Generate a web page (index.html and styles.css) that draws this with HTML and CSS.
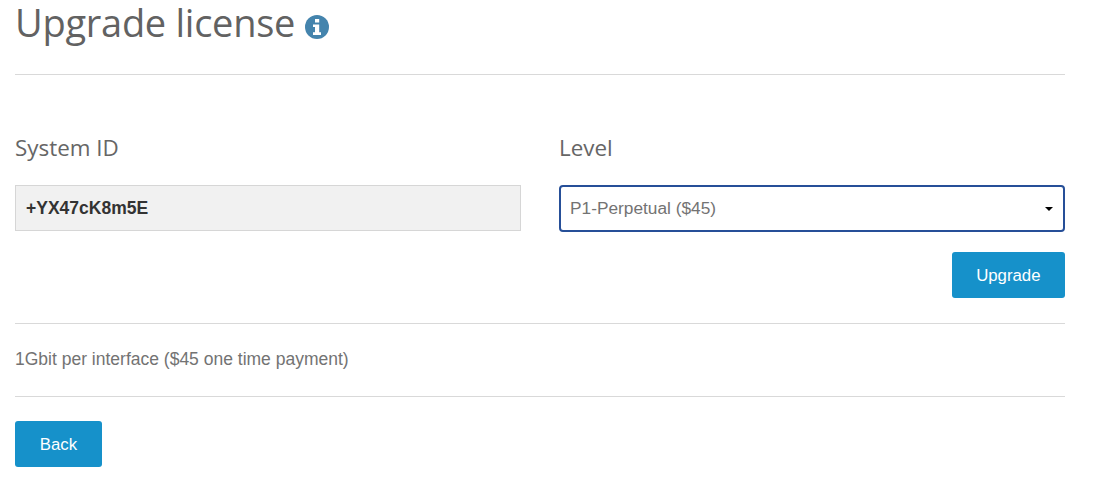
FILE: index.html
```html
<!DOCTYPE html>
<html lang="en">
<head>
  <meta charset="UTF-8">
  <meta name="viewport" content="width=device-width, initial-scale=1.0">
  <title>Upgrade license</title>
  <link rel="stylesheet" href="styles.css">
</head>
<body>
  <div class="container">
    <h1>
      Upgrade license
      <svg class="info" viewBox="0 0 24 24" aria-label="Info">
        <circle cx="12" cy="12" r="12"/>
        <path d="M8 9.5h6.2v7.8H16V20H8v-2.7h2V12H8zM10 4h4.2v3.4H10z"/>
      </svg>
    </h1>

    <form class="upgrade-form">
      <div class="row">
        <div class="field">
          <label for="systemId">System ID</label>
          <div class="system-id" id="systemId">+YX47cK8m5E</div>
        </div>
        <div class="field">
          <label for="level">Level</label>
          <div class="select" id="level" tabindex="0">
            <span>P1-Perpetual ($45)</span>
            <span class="caret"></span>
          </div>
        </div>
      </div>
      <div class="actions">
        <button type="button" class="button">Upgrade</button>
      </div>
    </form>

    <p class="description">1Gbit per interface ($45 one time payment)</p>

    <button type="button" class="button back">Back</button>
  </div>
</body>
</html>
```

FILE: styles.css
```css
* {
  box-sizing: border-box;
}

body {
  margin: 0;
  background: #fff;
  color: #737373;
  font-family: "Liberation Sans", Arial, sans-serif;
  font-size: 17.5px;
}

.container {
  width: 1050px;
  margin-left: 15px;
}

h1 {
  display: flex;
  align-items: center;
  gap: 10px;
  height: 75px;
  margin: 0;
  padding-bottom: 29px;
  border-bottom: 1px solid #d9d9d9;
  color: #626262;
  font-family: "Open Sans", sans-serif;
  font-size: 38px;
  font-weight: 400;
  letter-spacing: -0.27px;
  line-height: 45px;
}

.info {
  width: 24px;
  height: 24px;
  margin-top: 9px;
  fill: #4484ad;
}

.info path {
  fill: #fff;
}

.upgrade-form {
  height: 249px;
  padding-top: 56px;
  border-bottom: 1px solid #d9d9d9;
}

.row {
  display: grid;
  grid-template-columns: 1fr 1fr;
  gap: 38px;
}

label {
  display: block;
  height: 54px;
  color: #666;
  font-family: "Open Sans", sans-serif;
  font-size: 22.4px;
  line-height: 34px;
}

.system-id {
  height: 46px;
  padding: 0 10px;
  border: 1px solid #d6d6d6;
  background: #f1f1f1;
  color: #333;
  font-weight: bold;
  line-height: 44px;
}

.select {
  display: flex;
  align-items: center;
  justify-content: space-between;
  height: 47px;
  padding: 0 10px 0 9px;
  border: 2px solid #264f98;
  border-radius: 4px;
  font-size: 17.3px;
  line-height: 43px;
}

.caret {
  border: 4px solid transparent;
  border-top-color: #000;
  border-bottom: 0;
}

.actions {
  display: flex;
  justify-content: flex-end;
  margin-top: 20px;
}

.button {
  min-width: 87px;
  height: 46px;
  padding: 1px 24.5px 0;
  border: 0;
  border-radius: 3px;
  background: #1691ca;
  color: #fff;
  font: 16.8px "Liberation Sans", Arial, sans-serif;
}

.description {
  height: 73px;
  margin: 0;
  border-bottom: 1px solid #d9d9d9;
  line-height: 71px;
}

.back {
  margin-top: 24px;
}
```
